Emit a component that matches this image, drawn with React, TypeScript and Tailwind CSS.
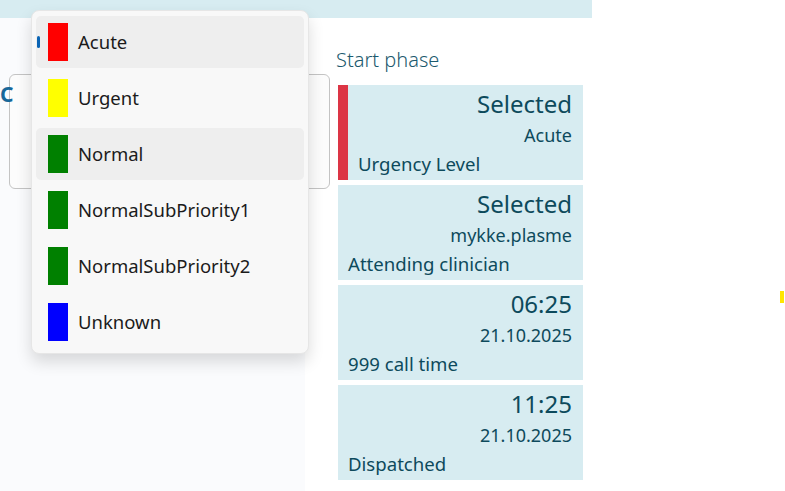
import React from 'react';

type Option = { name: string; color: string; highlighted?: boolean; selected?: boolean };

const options: Option[] = [
  { name: 'Acute', color: '#ff0000', highlighted: true, selected: true },
  { name: 'Urgent', color: '#ffff00' },
  { name: 'Normal', color: '#008000', highlighted: true },
  { name: 'NormalSubPriority1', color: '#008000' },
  { name: 'NormalSubPriority2', color: '#008000' },
  { name: 'Unknown', color: '#0000ff' },
];

type Card = { big: string; small: string; label: string; accent?: boolean };

const cards: Card[] = [
  { big: 'Selected', small: 'Acute', label: 'Urgency Level', accent: true },
  { big: 'Selected', small: 'mykke.plasme', label: 'Attending clinician' },
  { big: '06:25', small: '21.10.2025', label: '999 call time' },
  { big: '11:25', small: '21.10.2025', label: 'Dispatched' },
];

const font = { fontFamily: '"Noto Sans", "Open Sans", sans-serif' };

const PhaseCard: React.FC<{ card: Card }> = ({ card }) => (
  <div className="flex h-[95px] bg-[#d7ecf1] text-[#0d4a5c]">
    {card.accent && <div className="w-[10px] shrink-0 bg-[#dc3545]" />}
    <div className="flex flex-1 flex-col pt-[4px] pl-[10px] pr-[11px]">
      <div className="text-right text-[24px] leading-[30px]">{card.big}</div>
      <div className="mt-[4px] text-right text-[18px] leading-[24px]">{card.small}</div>
      <div className="mt-[5px] text-[18.6px] leading-[24px]">{card.label}</div>
    </div>
  </div>
);

const App: React.FC = () => {
  return (
    <div className="relative h-[491px] w-[785px] overflow-hidden bg-white" style={font}>
      <div className="flex h-full w-[592px] flex-col">
        <div className="h-[18px] shrink-0 bg-[#d7ecf1]" />
        <div className="flex flex-1">
          {/* left panel with the open combobox */}
          <div className="relative w-[305px] shrink-0 bg-[#fafbfd]">
            <div className="ml-[9px] mt-[56px] h-[115px] w-[321px] rounded-[6px] border border-[#c4c4c4] bg-[#fcfcfc]" />
            <div className="absolute left-0 top-[62px] text-[21px] font-bold leading-[28px] text-[#17689a]">C</div>

            <div className="absolute left-[31px] top-[-8px] z-10 flex w-[278px] flex-col gap-[4px] rounded-[8px] border border-[#e6e6e6] bg-[#f8f8f8] px-[4px] pb-[5px] pt-[5px] shadow-[0_8px_16px_rgba(0,0,0,0.14)]">
              {options.map((o) => (
                <div
                  key={o.name}
                  className={`relative flex h-[52px] items-center rounded-[5px] pl-[12px] ${o.highlighted ? 'bg-[#eeeeee]' : ''}`}
                >
                  {o.selected && (
                    <div className="absolute left-[1px] top-[20px] h-[12px] w-[3px] rounded-full bg-[#0a64b4]" />
                  )}
                  <div className="h-[38px] w-[20px] shrink-0" style={{ backgroundColor: o.color }} />
                  <span className="ml-[10px] text-[18.5px] text-[#1b1b1b]">{o.name}</span>
                </div>
              ))}
            </div>
          </div>

          {/* right column */}
          <div className="flex flex-1 flex-col pl-[31px]">
            <div className="mt-[30px] text-[20px] font-light leading-[24px] text-[#1c5a6e]">Start phase</div>
            <div className="ml-[2px] mt-[13px] flex w-[245px] flex-col gap-[5px]">
              {cards.map((c, i) => (
                <PhaseCard key={i} card={c} />
              ))}
            </div>
          </div>
        </div>
      </div>
      <div className="absolute left-[780px] top-[291px] h-[12px] w-[4px] bg-[#ffe600]" />
    </div>
  );
};

export default App;
